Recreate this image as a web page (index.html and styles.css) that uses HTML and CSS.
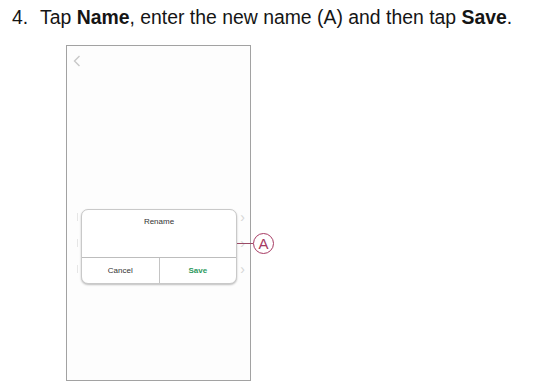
FILE: index.html
```html
<!DOCTYPE html>
<html lang="en">

<head>
  <meta charset="UTF-8" />
  <meta name="viewport" content="width=device-width, initial-scale=1.0" />
  <title>Rename</title>
  <link rel="stylesheet" href="styles.css">
</head>

<body>
  <h1 class="step"><span class="num">4.</span>Tap <strong>Name</strong>, enter the new name (A) and then tap <strong>Save</strong>.</h1>

  <div class="phone">
    <div class="back">
      <svg width="8" height="12" viewBox="0 0 8 12"><path d="M6.5 1 L1.5 6 L6.5 11" fill="none" stroke="#c8c8c8" stroke-width="1.4"/></svg>
    </div>

    <!-- rows behind the dialog -->
    <div class="rows">
      <div class="row"><span class="tick"></span><span class="chev">›</span></div>
      <div class="row"><span class="tick"></span><span class="chev">›</span></div>
      <div class="row"><span class="tick"></span><span class="chev">›</span></div>
    </div>

    <div class="dialog">
      <div class="dialog-title">Rename</div>
      <div class="dialog-actions">
        <div class="action">Cancel</div>
        <div class="action save">Save</div>
      </div>
    </div>

    <div class="callout">
      <span class="callout-line"></span>
      <span class="callout-mark">A</span>
    </div>
  </div>
</body>

</html>
```

FILE: styles.css
```css
body {
  margin: 0;
  background: #fff;
  font-family: 'Liberation Sans', Arial, sans-serif;
}

.step {
  margin: 0;
  padding: 6px 0 0 12px;
  font-size: 19.4px;
  font-weight: normal;
  line-height: 23px;
  color: #151515;
}

.step .num {
  display: inline-block;
  width: 28px;
}

.phone {
  position: relative;
  box-sizing: border-box;
  width: 185px;
  height: 336px;
  margin: 16px 0 0 66px;
  border: 1px solid #a2a2a2;
  background: #fdfdfd;
}

.back {
  padding: 7px 0 0 6px;
  height: 14px;
}

.rows {
  padding-top: 137px;
}

.row {
  display: flex;
  justify-content: space-between;
  align-items: center;
  height: 26px;
  padding: 0 5px 0 10px;
}

.tick {
  width: 1px;
  height: 8px;
  background: #e6e6e6;
}

.chev {
  font-size: 14px;
  color: #d6d6d6;
}

.dialog {
  position: absolute;
  left: 14px;
  top: 163px;
  width: 156px;
  height: 75px;
  box-sizing: border-box;
  background: #fff;
  border-radius: 7px;
  border: 1px solid #c9c9c9;
  box-shadow: 0 1px 2px rgba(0, 0, 0, 0.25);
  display: flex;
  flex-direction: column;
  overflow: hidden;
}

.dialog-title {
  flex: 1;
  text-align: center;
  font-size: 8px;
  color: #333;
  padding-top: 7px;
  border-bottom: 1px solid #bdbdbd;
}

.dialog-actions {
  display: flex;
  height: 25px;
}

.action {
  flex: 1;
  display: flex;
  align-items: center;
  justify-content: center;
  font-size: 8px;
  color: #333;
}

.action + .action {
  border-left: 1px solid #c4c4c4;
}

.save {
  color: #2e9a5e;
  font-weight: bold;
}

.callout {
  position: absolute;
  left: 170px;
  top: 187px;
  display: flex;
  align-items: center;
}

.callout-line {
  width: 16px;
  height: 1px;
  background: #9a4a66;
}

.callout-mark {
  box-sizing: border-box;
  width: 21px;
  height: 21px;
  border: 1px solid #a63a62;
  border-radius: 50%;
  display: flex;
  align-items: center;
  justify-content: center;
  font-size: 15px;
  color: #a63a62;
  background: #fff;
}
```
